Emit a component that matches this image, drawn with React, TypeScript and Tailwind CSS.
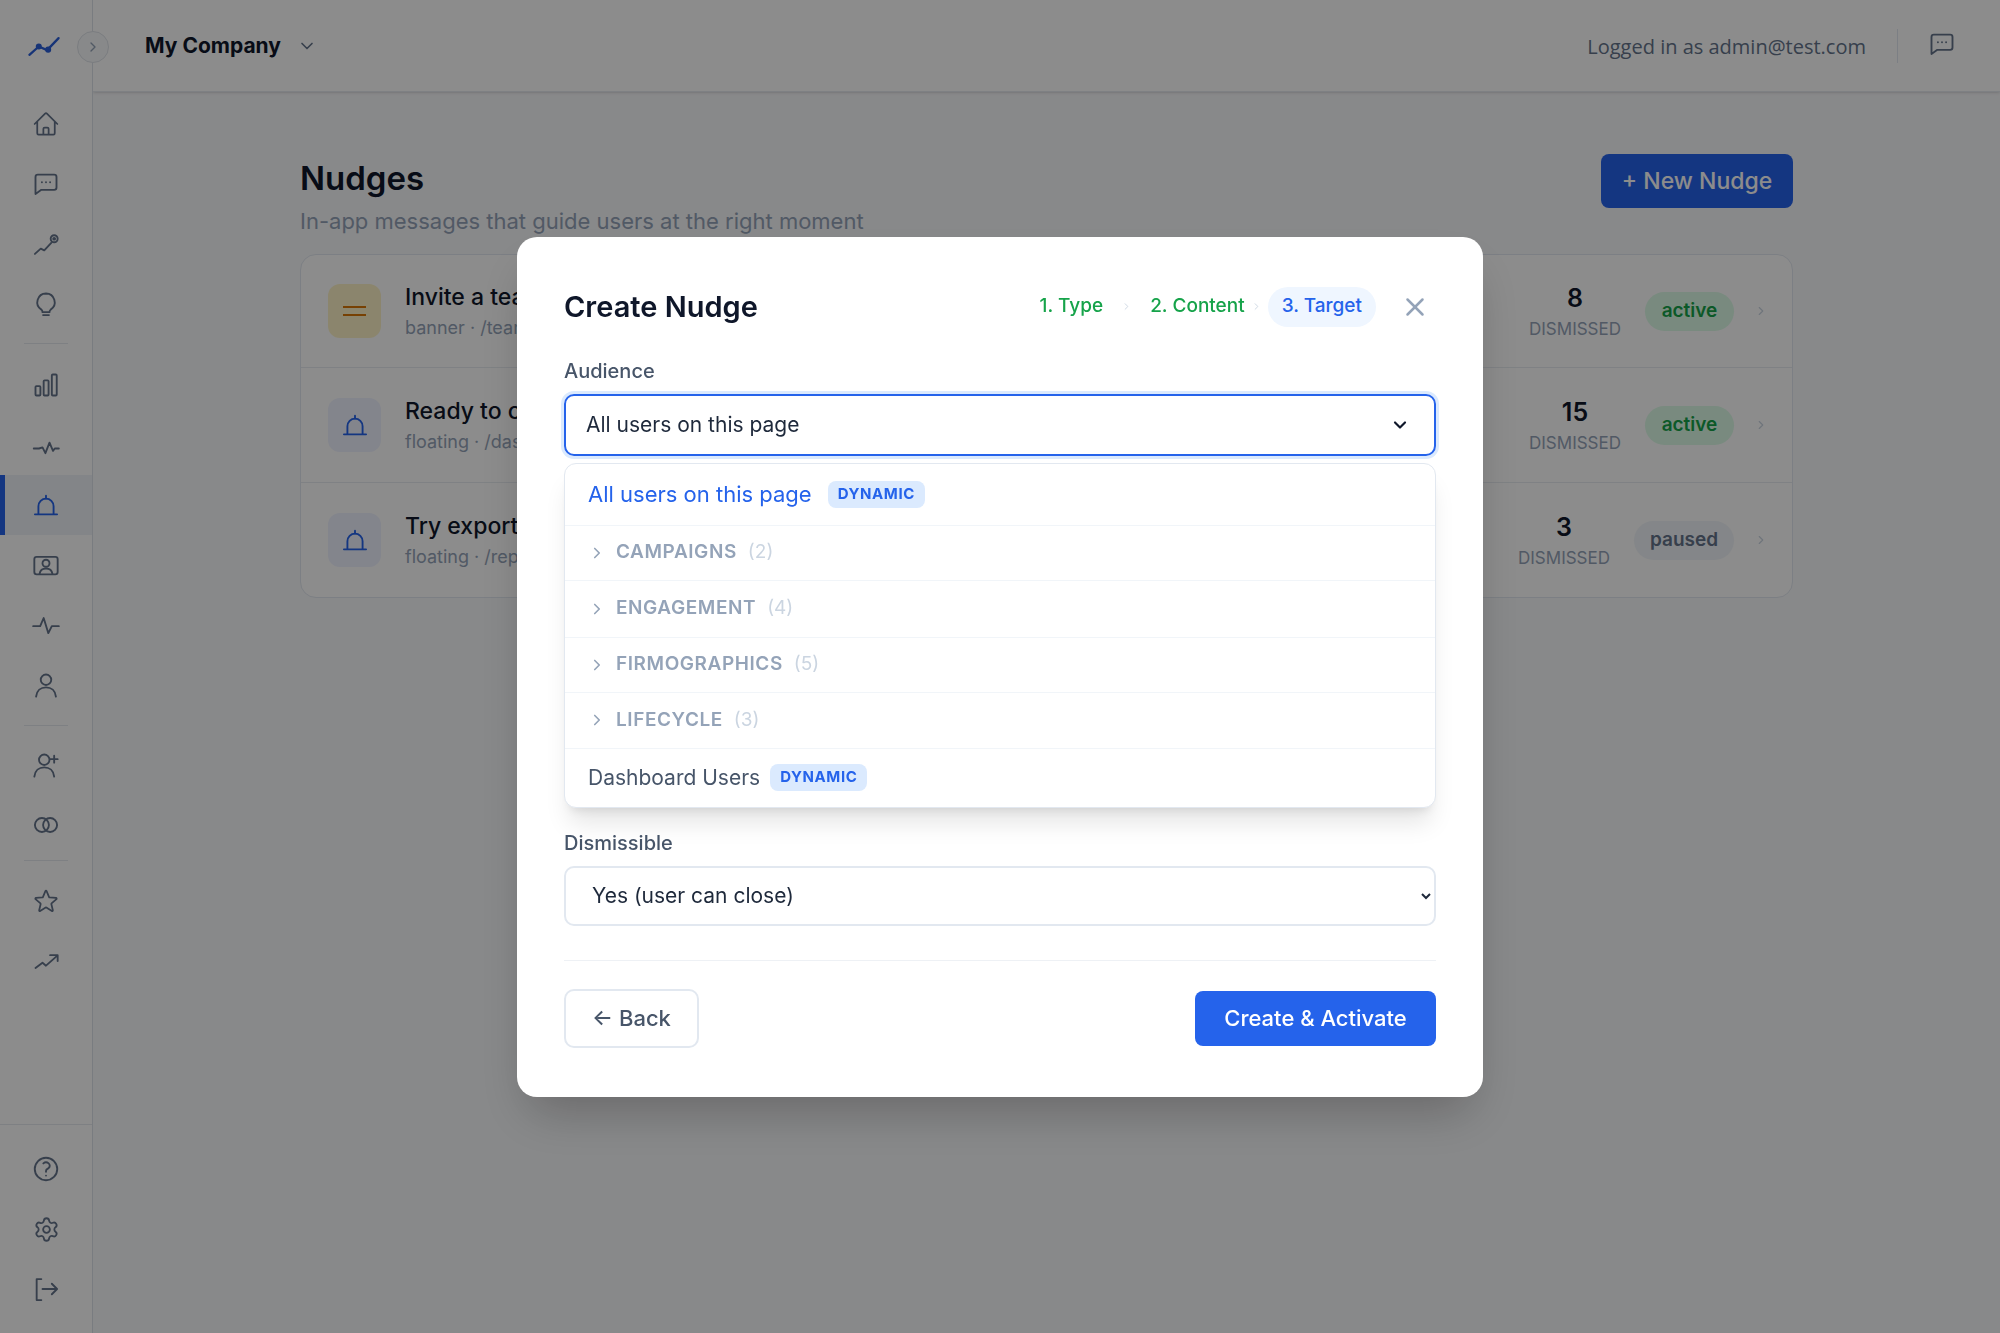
import React from "react";
import { HiOutlineHome, HiOutlineStar, HiOutlineQuestionMarkCircle } from "react-icons/hi2";
import { Settings, ChevronDown, ChevronRight, X } from "lucide-react";

type IP = { className?: string };
const S = ({ className, children, sw = 1.6 }: IP & { children: React.ReactNode; sw?: number }) => (
  <svg viewBox="0 0 24 24" fill="none" stroke="currentColor" strokeWidth={sw} strokeLinecap="round" strokeLinejoin="round" className={className}>{children}</svg>
);
const ic = "w-[28px] h-[28px]";
const Chat = ({ className = ic }: IP) => (
  <S className={className}><path d="M5 4h14a2 2 0 0 1 2 2v9a2 2 0 0 1-2 2H8l-5 3.5V6a2 2 0 0 1 2-2z" /><path d="M8.5 10.5h.01M12 10.5h.01M15.5 10.5h.01" /></S>
);
const Pin = () => <S className={ic}><path d="M2.5 20.5l5-4.5 3 1.5 6-6.5" /><circle cx="19" cy="7.5" r="3" /><circle cx="19" cy="7.5" r=".8" /></S>;
const Bulb = () => <S className={ic}><path d="M12 3a7.5 7.5 0 0 0-4 13.8c.8.6 1 1.2 1 2.2h6c0-1 .3-1.6 1-2.2A7.5 7.5 0 0 0 12 3z" /><path d="M9.5 21.5h5" /></S>;
const Bars = () => <S className={ic}><rect x="3" y="13" width="4.2" height="8" rx=".8" /><rect x="10" y="8" width="4.2" height="13" rx=".8" /><rect x="17" y="3" width="4.2" height="18" rx=".8" /></S>;
const Wave = () => <S className={ic}><path d="M1.5 15H6l3-1 2.5 5 3.5-9 3 7 1.5-2h3.5" /></S>;
const BellD = ({ className = ic }: IP) => <S className={className}><path d="M5.5 19.5V13a6.5 6.5 0 0 1 13 0v6.5" /><path d="M2.5 20h19M12 4v2.5" /></S>;
const Card = () => <S className={ic}><rect x="2" y="5" width="20" height="15" rx="2" /><circle cx="12" cy="10.5" r="3" /><path d="M6.5 19.5c.5-3 2.8-4.5 5.5-4.5s5 1.500 5.500 4.500" /></S>;
const Pulse = () => <S className={ic}><path d="M1 13h6l3-7 4 13 3-6h6" /></S>;
const User = () => <S className={ic}><circle cx="12" cy="7.500" r="4.500" /><path d="M3.500 22c.5-5 4-8 8.500-8s8 3 8.500 8" /></S>;
const UserPlus = () => <S className={ic}><circle cx="10.500" cy="7.500" r="4.500" /><path d="M2 22c.5-5 4-8 8.500-8s8 3 8.500 8" /><path d="M19 4v6M16 7h6" /></S>;
const Rings = () => <S className={ic}><circle cx="8.500" cy="12" r="6" /><circle cx="15.500" cy="12" r="6" /></S>;
const Trend = () => <S className={ic}><path d="M3 18l6-4.500 3 2.500 9-8" /><path d="M15.500 7H22v5" /></S>;
const Logout = () => <S className={ic}><path d="M8 3.500H4v18h4" /><path d="M9 12h12M17 7.500l4.500 4.500-4.500 4.500" /></S>;
const Logo = () => (
  <svg viewBox="0 0 32 24" className="w-[34px] h-[25px]" fill="none" stroke="#2b5fd9" strokeWidth="2.200" strokeLinecap="round" strokeLinejoin="round">
    <path d="M2 20l9-8 8 3.500L30 4" /><circle cx="11" cy="12" r="1.800" fill="#2b5fd9" /><circle cx="20" cy="15" r="1.800" fill="#2b5fd9" />
  </svg>
);

const Item = ({ children, active }: { children: React.ReactNode; active?: boolean }) => (
  <div className={`h-[60px] flex items-center justify-center border-l-[5px] pr-[5px] ${active ? "border-[#2563eb] bg-[#eef2f7] text-[#2563eb]" : "border-transparent text-[#64748b]"}`}>{children}</div>
);
const Rule = ({ m }: { m: string }) => <div className={`h-px mx-[24px] bg-[#e5e9ef] ${m}`} />;

const Sidebar = () => (
  <aside className="w-[93px] shrink-0 h-[1333px] border-r border-[#dde2e9] bg-white flex flex-col relative">
    <div className="h-[92px] flex items-center pl-[27px] shrink-0"><Logo /></div>
    <button className="absolute left-[77px] top-[31px] w-[32px] h-[32px] rounded-full border border-[#dfe3e9] bg-[#f8fafc] flex items-center justify-center text-[#94a3b8]">
      <ChevronRight className="w-[16px] h-[16px]" />
    </button>
    <div className="pt-[2px]">
      <Item><HiOutlineHome className="w-[28px] h-[28px]" /></Item>
      <Item><Chat /></Item>
      <Item><Pin /></Item>
      <Item><Bulb /></Item>
    </div>
    <Rule m="mt-[9px] mb-[11px]" />
    <Item><Bars /></Item>
    <Item><Wave /></Item>
    <Item active><BellD /></Item>
    <Item><Card /></Item>
    <Item><Pulse /></Item>
    <Item><User /></Item>
    <Rule m="mt-[10px] mb-[9px]" />
    <Item><UserPlus /></Item>
    <Item><Rings /></Item>
    <Rule m="mt-[5px] mb-[10px]" />
    <Item><HiOutlineStar className="w-[28px] h-[28px]" /></Item>
    <Item><Trend /></Item>
    <div className="mt-auto border-t border-[#e5e9ef] pt-[14px] pb-[14px]">
      <Item><HiOutlineQuestionMarkCircle className="w-[30px] h-[30px]" /></Item>
      <Item><Settings className="w-[27px] h-[27px]" strokeWidth={1.6} /></Item>
      <Item><Logout /></Item>
    </div>
  </aside>
);

const Header = () => (
  <header className="h-[92px] bg-white border-b border-[#e5e9ef] flex items-center pl-[52px] pr-[44px] shadow-sm">
    <span className="text-[21px] font-bold text-[#0f172a] mr-[16px]">My Company</span>
    <ChevronDown className="w-[20px] h-[20px] text-[#64748b]" />
    <div className="ml-auto flex items-center">
      <span className="text-[20px] text-[#64748b] [font-family:'Open_Sans',sans-serif] pt-[2px]">Logged in as admin@test.com</span>
      <div className="w-px h-[34px] bg-[#e2e8f0] ml-[31px] mr-[30px]" />
      <Chat className="w-[28px] h-[28px] text-[#64748b] -mt-[4px]" />
    </div>
  </header>
);

type RowP = { banner?: boolean; title: string; sub: string; clicks: string; dis: string; status: string; h: string };
const Row = ({ banner, title, sub, dis, status, h }: RowP) => (
  <div className={`${h} flex items-center pl-[27px] pr-[24px] border-b border-[#e8ecf1] last:border-b-0`}>
    <div className={`w-[53px] h-[54px] rounded-[12px] flex items-center justify-center mr-[24px] ${banner ? "bg-[#fef3c7]" : "bg-[#eef2ff]"}`}>
      {banner ? (
        <div className="w-[23px] flex flex-col gap-[6px]"><div className="h-[2px] bg-[#d97706]" /><div className="h-[2px] bg-[#d97706]" /></div>
      ) : (
        <BellD className="w-[28px] h-[28px] text-[#2563eb]" />
      )}
    </div>
    <div>
      <div className="text-[23px] font-medium text-[#0f172a] leading-[30px]">{title}</div>
      <div className="text-[18px] text-[#94a3b8] leading-[26px] mt-[3px]">{sub}</div>
    </div>
    <div className="ml-auto flex items-center">
      <div className="text-center mr-[24px]">
        <div className="text-[25px] font-semibold text-[#0f172a] leading-[32px]">{dis}</div>
        <div className="text-[17px] text-[#94a3b8] leading-[24px] mt-[3px]">DISMISSED</div>
      </div>
      <span className={`h-[39px] rounded-full flex items-center text-[19px] font-semibold ${status === "active" ? "w-[89px] justify-center bg-[#dcfce7] text-[#16a34a]" : "w-[100px] justify-center bg-[#f1f5f9] text-[#64748b]"}`}>{status}</span>
      <ChevronRight className="w-[14px] h-[14px] text-[#cbd5e1] ml-[20px]" />
    </div>
  </div>
);

const Page = () => (
  <main className="flex-1 px-[207px] pt-[62px]">
    <div className="flex items-start justify-between">
      <div>
        <h1 className="text-[33px] font-semibold text-[#0f172a] leading-[44px] mt-[2px]">Nudges</h1>
        <p className="text-[22px] text-[#94a3b8] leading-[30px] mt-[6px]">In-app messages that guide users at the right moment</p>
      </div>
      <button className="w-[192px] h-[54px] rounded-[8px] bg-[#2563eb] text-white text-[23px] font-medium">+ New Nudge</button>
    </div>
    <div className="mt-[18px] rounded-[16px] border border-[#e2e8f0] bg-white">
      <Row banner h="h-[113px]" title="Invite a teammate" sub="banner · /team" clicks="2" dis="8" status="active" />
      <Row h="h-[115px]" title="Ready to continue" sub="floating · /dashboard" clicks="4" dis="15" status="active" />
      <Row h="h-[114px]" title="Try exporting" sub="floating · /reports" clicks="1" dis="3" status="paused" />
    </div>
  </main>
);

const Dyn = () => (
  <span className="inline-flex items-center h-[27px] px-[10px] rounded-[8px] bg-[#dbeafe] text-[#2563eb] text-[15px] font-bold tracking-[0.04em]">DYNAMIC</span>
);
const Group = ({ name, n, h }: { name: string; n: number; h: string }) => (
  <div className={`${h} flex items-center pl-[24px] border-t border-[#f1f5f9]`}>
    <ChevronRight className="w-[18px] h-[18px] text-[#94a3b8] -ml-[1px]" strokeWidth={2.2} />
    <span className="ml-[10px] text-[19px] font-semibold text-[#94a3b8] tracking-[0.03em]">{name}</span>
    <span className="ml-[11px] text-[19px] text-[#cbd5e1]">({n})</span>
  </div>
);

const Modal = () => (
  <div className="fixed inset-0 bg-black/45 flex items-center justify-center">
    <div className="w-[966px] h-[860px] bg-white rounded-[20px] px-[47px] pt-[50px] shadow-2xl">
      <div className="h-[40px] flex items-center">
        <h2 className="text-[29px] font-semibold text-[#0f172a]">Create Nudge</h2>
        <div className="ml-auto flex items-center text-[19px] font-medium">
          <span className="text-[#16a34a]">1. Type</span>
          <ChevronRight className="w-[11px] h-[11px] text-[#cbd5e1] mx-[18px]" />
          <span className="text-[#16a34a]">2. Content</span>
          <ChevronRight className="w-[11px] h-[11px] text-[#cbd5e1] mx-[6px]" />
          <span className="h-[40px] px-[14px] flex items-center rounded-full bg-[#eff6ff] text-[#2563eb]">3. Target</span>
        </div>
        <button className="ml-[24px] mr-[6px] text-[#94a3b8]"><X className="w-[30px] h-[30px]" strokeWidth={2} /></button>
      </div>
      <div className="mt-[31px] text-[20px] font-medium text-[#475569] leading-[26px]">Audience</div>
      <div className="mt-[10px] h-[62px] rounded-[10px] border-2 border-[#2563eb] ring-[3px] ring-[#dbeafe] flex items-center pl-[20px] pr-[24px]">
        <span className="text-[21px] text-[#1e293b]">All users on this page</span>
        <ChevronDown className="ml-auto w-[20px] h-[20px] text-[#0f172a]" strokeWidth={2.6} />
      </div>
      <div className="mt-[7px] h-[345px] rounded-[12px] border border-[#e2e8f0] bg-white shadow-xl flex flex-col">
        <div className="h-[61px] flex items-center pl-[23px] gap-[16px]">
          <span className="text-[22px] text-[#2563eb]">All users on this page</span><Dyn />
        </div>
        <Group name="CAMPAIGNS" n={2} h="h-[55px]" />
        <Group name="ENGAGEMENT" n={4} h="h-[57px]" />
        <Group name="FIRMOGRAPHICS" n={5} h="h-[55px]" />
        <Group name="LIFECYCLE" n={3} h="h-[56px]" />
        <div className="flex-1 flex items-center pl-[23px] gap-[10px] border-t border-[#f1f5f9]">
          <span className="text-[21px] text-[#475569]">Dashboard Users</span><Dyn />
        </div>
      </div>
      <div className="mt-[22px] text-[20px] font-medium text-[#475569] leading-[26px]">Dismissible</div>
      <select defaultValue="yes" className="mt-[10px] block w-full h-[60px] rounded-[10px] border-2 border-[#e2e8f0] bg-white pl-[22px] pr-[6px] text-[21px] text-[#1e293b] outline-none [font-family:Inter,sans-serif]">
        <option value="yes">Yes (user can close)</option>
      </select>
      <div className="mt-[34px] h-px bg-[#eef1f5]" />
      <div className="mt-[28px] flex items-center justify-between">
        <button className="w-[135px] h-[59px] rounded-[10px] border-2 border-[#e2e8f0] text-[22px] font-medium text-[#475569]">← Back</button>
        <button className="w-[241px] h-[55px] rounded-[8px] bg-[#2563eb] text-white text-[22px] font-medium">Create &amp; Activate</button>
      </div>
    </div>
  </div>
);

export default function App() {
  return (
    <div className="w-[2000px] h-[1333px] overflow-hidden bg-[#f8f9fb] flex [font-family:Inter,sans-serif]">
      <Sidebar />
      <div className="flex-1 flex flex-col">
        <Header />
        <Page />
      </div>
      <Modal />
    </div>
  );
}
